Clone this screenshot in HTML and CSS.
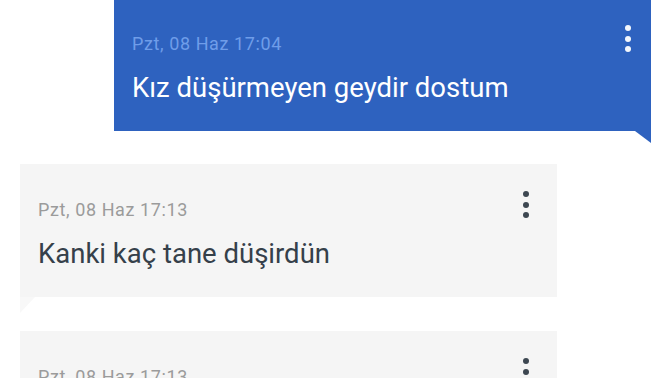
FILE: index.html
```html
<!DOCTYPE html>
<html lang="tr">
<head>
  <meta charset="UTF-8" />
  <meta name="viewport" content="width=device-width, initial-scale=1.0"/>
  <title>Mesajlar</title>
  <link rel="stylesheet" href="styles.css">
</head>
<body>

  <div class="mesajlar">

    <div class="mesaj giden">
      <div class="mesaj-ust">
        <span class="tarih">Pzt, 08 Haz 17:04</span>
        <button class="menu-button" aria-label="Menü"><i></i><i></i><i></i></button>
      </div>
      <p class="metin">Kız düşürmeyen geydir dostum</p>
    </div>

    <div class="mesaj gelen">
      <div class="mesaj-ust">
        <span class="tarih">Pzt, 08 Haz 17:13</span>
        <button class="menu-button" aria-label="Menü"><i></i><i></i><i></i></button>
      </div>
      <p class="metin">Kanki kaç tane düşirdün</p>
    </div>

    <div class="mesaj gelen">
      <div class="mesaj-ust">
        <span class="tarih">Pzt, 08 Haz 17:13</span>
        <button class="menu-button" aria-label="Menü"><i></i><i></i><i></i></button>
      </div>
      <p class="metin">Kanki kaç tane düşirdün</p>
    </div>

  </div>

</body>
</html>
```

FILE: styles.css
```css
body {
  margin: 0;
  font-family: Roboto, "Noto Sans", Arial, sans-serif;
  background: white;
  overflow: hidden;
}

.mesajlar {
  display: flex;
  flex-direction: column;
  gap: 33px;
  margin-top: -2px;
}

.mesaj {
  position: relative;
  box-sizing: border-box;
  height: 133px;
  padding: 27px 28px 0 18px;
}

.gelen + .gelen {
  margin-top: 1px;
}

.mesaj-ust {
  display: flex;
  justify-content: space-between;
  align-items: flex-start;
}

.tarih {
  margin-top: 9px;
  font-size: 18px;
  line-height: 20px;
  letter-spacing: 0.6px;
}

.metin {
  margin: 18px 0 0;
  font-size: 27.5px;
  line-height: 32px;
}

.menu-button {
  display: flex;
  flex-direction: column;
  gap: 4.5px;
  padding: 0;
  background: none;
  border: none;
  cursor: pointer;
}

.menu-button i {
  width: 6px;
  height: 6px;
  border-radius: 50%;
}

/* giden mesaj (mavi) */
.giden {
  margin-left: 114px;
  width: 537px;
  background: #2e62bf;
  color: white;
  padding-right: 20px;
}

.giden .tarih {
  color: #6f9de9;
}

.giden .menu-button i {
  background: #f4f7fc;
}

.giden::after {
  content: "";
  position: absolute;
  right: 0;
  bottom: -12px;
  width: 16px;
  height: 12px;
  background: #2e62bf;
  clip-path: polygon(0 0, 100% 0, 100% 100%);
}

/* gelen mesaj (gri) */
.gelen {
  margin-left: 20px;
  width: 537px;
  background: #f5f5f5;
  color: #35404a;
}

.gelen .tarih {
  color: #9b9b9b;
}

.gelen .menu-button i {
  background: #3d4751;
}

.gelen::after {
  content: "";
  position: absolute;
  left: 0;
  bottom: -16px;
  width: 15px;
  height: 16px;
  background: #f8f8f8;
  clip-path: polygon(0 0, 100% 0, 0 100%);
}
```
